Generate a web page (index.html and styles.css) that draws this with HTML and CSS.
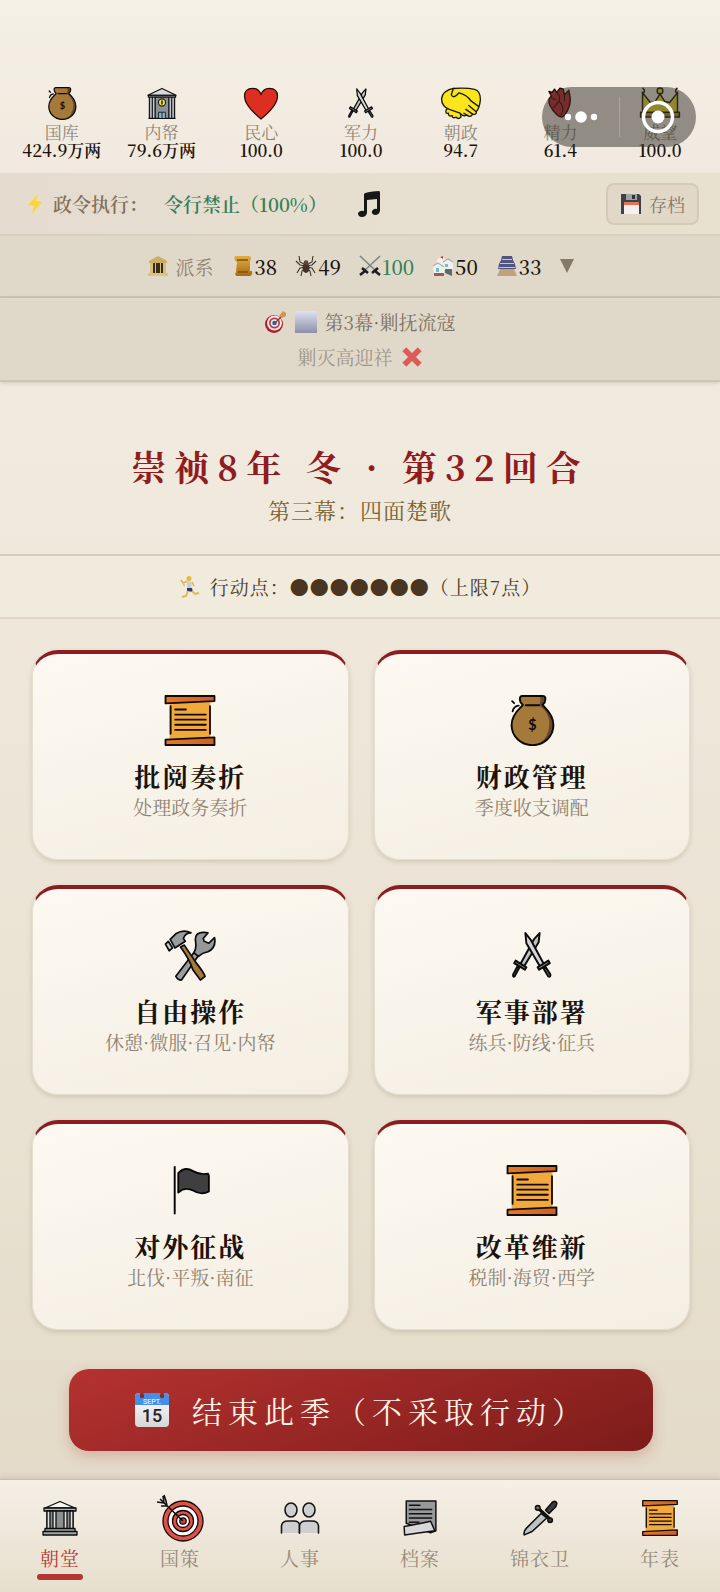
FILE: index.html
```html
<!DOCTYPE html>
<html lang="zh-CN">
<head>
<meta charset="utf-8">
<meta name="viewport" content="width=device-width, initial-scale=1">
<title>朝堂</title>
<link rel="stylesheet" href="styles.css">
</head>
<body>
<svg class="sprite" aria-hidden="true">
  <defs>
    <linearGradient id="gold" x1="0" y1="0" x2="0" y2="1"><stop offset="0" stop-color="#e0ae45"/><stop offset="1" stop-color="#a96a14"/></linearGradient>
    <linearGradient id="bolt-fill" x1="0" y1="0" x2="0" y2="1"><stop offset="0" stop-color="#ffd43c"/><stop offset="1" stop-color="#f8d63c"/></linearGradient>
    <linearGradient id="square-fill" x1="0" y1="0" x2="0" y2="1"><stop offset="0" stop-color="#dde2f0"/><stop offset="1" stop-color="#8d90a8"/></linearGradient>
    <linearGradient id="roll-fill"><stop offset="0" stop-color="#e27a2a"/><stop offset="1" stop-color="#cf5f22"/></linearGradient>
    <linearGradient id="page-fill" x1="0" y1="0" x2="0" y2="1"><stop offset="0" stop-color="#ffffff"/><stop offset="1" stop-color="#d6d6d6"/></linearGradient>

    <symbol id="scroll" viewBox="0 0 50 50">
      <path d="M5 7H45V43H5z" fill="#f1a93c"/>
      <g stroke="#120a04" stroke-width="1.8" stroke-linejoin="round" stroke-linecap="round">
        <path d="M1 1H49V6L1 8.2z" fill="url(#roll-fill)"/>
        <path d="M1 43.8L49 41.6V49H1z" fill="url(#roll-fill)"/>
        <path d="M6 11V38M44.6 11V38M10.5 14.2H21M10.5 19.2H40.5M10.5 24.2H40.5M10.5 29.2H40.5M10.5 34.2H40.5" fill="none"/>
      </g>
    </symbol>

    <symbol id="bag" viewBox="0 0 50 50">
      <path d="M16 9.5C12 6.500 12.500 1 15.500 1H35.500C39 1 39 6.500 35.500 9.500C36 12 46 17 46 29.500C46 41 36.500 49.200 25.500 49.200C14.500 49.200 5 41 5 29.500C5 17 15.500 12 16 9.500z" fill="#a57939"/>
      <path d="M33 2Q34 6 32 10Q43 18 42 30Q41 42 32 48Q46 42 46 29.500Q45 17 35.500 9.500Q39 5 35 1z" fill="#6a462f"/>
      <path d="M16 9.500C12 6.500 12.500 1 15.500 1H35.500C39 1 39 6.500 35.500 9.500C36 12 46 17 46 29.500C46 41 36.500 49.200 25.500 49.200C14.500 49.200 5 41 5 29.500C5 17 15.500 12 16 9.500zM19 10H32" fill="none" stroke="#0d0a06" stroke-width="1.9" stroke-linecap="round"/>
      <path d="M6 16Q7 11 12 10.500M7.500 8L5.500 6" fill="none" stroke="#0d0a06" stroke-width="1.8" stroke-linecap="round"/>
      <text x="25.500" y="34" text-anchor="middle" class="coin-sign">$</text>
    </symbol>

    <symbol id="bank" viewBox="0 0 32 34">
      <path d="M3 9H29V33H3z" fill="#8c9198"/>
      <path d="M4 10H8V33H4zM24 10H28V33H24z" fill="#c4c8cc"/>
      <path d="M1.500 8.500L16 1.500L30.500 8.500z" fill="#dadada" stroke="#111" stroke-width="1.200" stroke-linejoin="round"/>
      <path d="M2 8.500H30V10.500H2zM3 10.500V32M6 10.500V32M9 10.500V32M23 10.500V32M26 10.500V32M29 10.500V32M2 32.300H30" stroke="#111" fill="none" stroke-width="1.200"/>
      <circle cx="16" cy="16" r="3.700" fill="#eadc42" stroke="#222" stroke-width="1.200"/><path d="M16 14V18" stroke="#222" stroke-width="1.500"/>
      <path d="M12.500 32V26H19.500V32M16 26V32" fill="#8bb4c6" stroke="#17252c"/>
    </symbol>

    <symbol id="heart" viewBox="0 0 34 32">
      <path d="M17 31Q1 18 1 9Q1 1.300 9 1.300Q14.500 1.300 17 7Q19.500 1.300 25 1.300Q33 1.300 33 9Q33 18 17 31z" fill="#dc2f22" stroke="#2a0805" stroke-width="1.200"/>
    </symbol>

    <symbol id="swords" viewBox="0 0 50 50">
      <g stroke="#0c0c0c" stroke-width="1.900" stroke-linejoin="round" stroke-linecap="round">
        <path d="M32.500 3L31.500 12L17 36L13.500 33.500L27 9z" fill="#c3c3c3"/>
        <path d="M9 30L19.500 36.500L18 39L7.500 32.500zM12.500 37L8 45.500Q6 46.500 6.500 43.500L10.500 36z" fill="#666"/>
        <path d="M18.500 3L24 10L37 34L33 36L19.500 13z" fill="#d5d5d5"/>
        <path d="M41 30L30.500 36.500L32 39L42.500 32.500zM38.500 36.500L43 43.500Q43.500 46.500 41 45.500L36.500 38z" fill="#777"/>
      </g>
    </symbol>

    <symbol id="handshake" viewBox="0 0 42 34">
      <g fill="#fbe61d" stroke="#1d1a05" stroke-width="1.400" stroke-linejoin="round" stroke-linecap="round">
        <path d="M6 23Q4 28 8 27Q8 31 12 29.500Q12 33 16 31Q18 34 21 31L20 25L9 21z"/>
        <path d="M13 1.500Q27 .500 35 2.500Q41 4 41 13Q40 22 37 25Q37 29 33 28Q31 32 27 29Q23 31 20 27L9 23Q1 20 1 12Q2 4 13 1.500z"/>
        <path d="M13 1.500Q12 5 11 8Q13 12 17 8L19 6Q27 8 31 14L39 20M26 23L33 28M29 19L36 25M24 27L27 29" fill="none"/>
      </g>
    </symbol>

    <symbol id="organ" viewBox="0 0 24 30">
      <path d="M4 8L2 4L5 5L7 2L9 5L12 1L15 2L16 7L20 3L21 8Q23 16 16 26Q13 29 9 25Q1 17 2 11z" fill="#c22a30" stroke="#250808" stroke-width="1.300" stroke-linejoin="round"/>
      <path d="M9 5Q13 8 11 13L6 19M11 13Q17 17 13 26M4 10L9 12M16 7V13" fill="none" stroke="#300b0b" stroke-width="1"/>
    </symbol>

    <symbol id="crown" viewBox="0 0 42 34">
      <path d="M3 6L11 16L16 15L21 7L26 15L31 16L39 6V27H3z" fill="#f0e030" stroke="#222006" stroke-width="1.500"/>
      <path d="M1 26H41V31H1z" fill="#b8942a" stroke="#222006" stroke-width="1.500"/>
      <circle cx="21" cy="4" r="3" fill="#e8d832" stroke="#222006" stroke-width="1.400"/><path d="M3 1Q7 4 3 7M39 1Q35 4 39 7" stroke="#222006" stroke-width="1.600" fill="none"/>
    </symbol>

    <symbol id="tools" viewBox="0 0 54 54">
      <g stroke="#0d0d0d" stroke-width="1.800" stroke-linejoin="round" stroke-linecap="round">
        <path d="M12 49L31 24L36 27L18 53Q14 53 12 49z" fill="#9a9c9d"/>
        <path d="M42 2.500Q31 2 33 13Q34 20 31 24L36 28Q40 24 46 23Q55 19 53 8L47 14L42 12L41 9L46 3z" fill="#969899"/>
        <path d="M17 18L21 16L33 34Q41 44 43 49L38 53L30 42Q27 32 17 18z" fill="#a37a38"/>
        <path d="M6 10L12 4Q20 -1 28 3Q22 3 20 9L22 12L11 19z" fill="#999b9c"/>
        <path d="M1 15L4 12L8.500 19L5 22z" fill="#c7c8c8"/>
      </g>
    </symbol>

    <symbol id="flag" viewBox="0 0 50 50">
      <path d="M13.500 8Q20 1 28 6Q35 10 42.500 8.500Q43.500 9 43.500 11V26Q36 30 28 25Q20 21 13.500 27z" fill="#3f3f41" stroke="#050505" stroke-width="1.800" stroke-linejoin="round"/>
      <path d="M10 2V47.500" stroke="#050505" stroke-width="1.900" stroke-linecap="round"/>
    </symbol>

    <symbol id="temple" viewBox="0 0 36 36">
      <g stroke="#0d0d0d" stroke-width="1.300" stroke-linejoin="round">
        <path d="M3 8L18 1.500L33 8z" fill="#f6f6f4"/><path d="M2 8H34V11H2z" fill="#b3b4b4"/>
        <path d="M5 11H31V29H5z" fill="#8d8f91"/><path d="M5 11H8V29H5zM11 11H14V29H11zM22 11H25V29H22zM28 11H31V29H28z" fill="#dedfdf"/>
        <path d="M3 28.500H33V31.500H3zM1 31.500H35V35H1z" fill="#a5a6a6"/>
      </g>
    </symbol>

    <symbol id="target" viewBox="0 0 48 48">
      <g stroke="#160808" stroke-width="1.300"><circle cx="27" cy="27" r="20" fill="#dc5148"/><circle cx="27" cy="27" r="15" fill="#fff"/><circle cx="27" cy="27" r="10.500" fill="#dc5148"/><circle cx="27" cy="27" r="6.500" fill="#fff"/><circle cx="27" cy="27" r="3.200" fill="#dc3f39"/></g>
      <path d="M27 27L4 5M11 12L10 7M11 12L5 12M8 9L7 2M8 9L1 8M10 7L8 1" stroke="#111" stroke-width="1.600" fill="none"/>
    </symbol>

    <symbol id="people" viewBox="0 0 40 32">
      <g fill="#cfced1" stroke="#151515" stroke-width="1.600" stroke-linecap="round"><ellipse cx="11" cy="8" rx="6" ry="7"/><ellipse cx="29" cy="8" rx="6" ry="7"/><path d="M1.500 31V24Q2 19 8 19H14Q19 19 19.500 23V31"/><path d="M19.500 31V24Q20 19 26 19H32Q38 19 38.500 24V31"/></g>
    </symbol>

    <symbol id="papers" viewBox="0 0 32 34">
      <g stroke="#111" stroke-width="1.400" stroke-linejoin="round" stroke-linecap="round"><path d="M3 1H31V29L26 31L3 22z" fill="#96989a"/><path d="M6 5H16M6 9H27M6 13H27M6 17H27M6 21H15" fill="none"/><path d="M1 25Q13 23 26 20L30 29Q15 31 1.500 33z" fill="#d8d7db"/></g>
    </symbol>

    <symbol id="dagger" viewBox="0 0 32 32">
      <g stroke="#101010" stroke-width="1.400" stroke-linejoin="round"><path d="M21 9L27 2Q30 0 31 3L30 6L24 12z" fill="#3d3d3f"/><path d="M17 12L22 16L9 28L2 31Q1 28 4 25z" fill="#bfc2c3"/><path d="M14 7L26 18" stroke-width="3"/><circle cx="14" cy="7" r="2" fill="#777"/><circle cx="25" cy="18" r="2" fill="#444"/></g>
    </symbol>

    <symbol id="bolt" viewBox="0 0 20 22"><path d="M13 1L3 12L9 13L7 21L17 9L11 8z" fill="url(#bolt-fill)"/></symbol>
    <symbol id="note" viewBox="0 0 24 26"><path d="M7 3Q8 1 22 0Q23 0 23 2V20Q22 24 18 24Q14 23 15 20Q17 17 20 18V8L10 9V22Q9 26 5 26Q1 26 1 22Q3 19 7 20z" fill="#171717"/></symbol>
    <symbol id="disk" viewBox="0 0 22 22"><path d="M1 1H19L21 3V21H1z" fill="#3d4148"/><path d="M6 1H17V7H6z" fill="#9aa2aa"/><path d="M12 2H15V6H12z" fill="#30343a"/><path d="M4 9H19V21H4z" fill="#f3f0ef"/><path d="M4 9H19V12H4z" fill="#e37352"/></symbol>
    <symbol id="museum" viewBox="0 0 22 22"><path d="M2 6L11 1L20 6V8H2z" fill="#c9ae64"/><path d="M4 8H18V19H4z" fill="#3a2a1a"/><path d="M3 8H6V19H3zM8 8H9V19H8zM13 8H14V19H13zM16 8H19V19H16z" fill="#d6bf7a"/><path d="M1 18H21V21H1z" fill="#dcc478"/></symbol>
    <symbol id="parchment" viewBox="0 0 20 22"><path d="M2 1H17Q19 3 17 6V16H19Q20 20 17 21H4Q1 20 3 17L4 7Q0 5 2 1z" fill="url(#gold)"/><path d="M4 5H15M5 17H15" stroke="#8a4d0c" stroke-width="1.300"/></symbol>
    <symbol id="spider" viewBox="0 0 20 22"><g fill="none" stroke="#3e322c" stroke-width="1.100"><path d="M10 10L4 7L3 1M10 10L16 7L17 1M10 11L4 10L0 6M10 11L16 10L20 6M10 12L4 13L1 18M10 12L16 13L19 18M10 13L6 16L5 21M10 13L14 16L15 21"/></g><ellipse cx="10" cy="13" rx="3.500" ry="5" fill="#443226"/><circle cx="10" cy="7.500" r="2.300" fill="#5b463a"/></symbol>
    <symbol id="blades" viewBox="0 0 22 22"><path d="M1 1L17 16M21 1L5 16" stroke="#7c858b" stroke-width="1.600"/><path d="M3 13L9 18M1 20L6 16M19 13L13 18M21 20L16 16" stroke="#1d1d20" stroke-width="2.600"/></symbol>
    <symbol id="houses" viewBox="0 0 22 22"><path d="M1 11L6 8L12 12V21H2zM5 5L9 1L14 5V10H5zM11 7L16 4L21 7V15H11z" fill="#edf1ef"/><path d="M1 11L6 8L12 12M11 7L16 4L21 7" stroke="#b9aaa4" stroke-width="1.200" fill="none"/><path d="M8 2L11 1L11 4z" fill="#b5403a"/><path d="M4 13H7V17H4zM13 9H16V12H13z" fill="#6cc3c4"/><path d="M2 18H12V21H2z" fill="#9a5a4c"/><path d="M13 14H20V21L13 18z" fill="#65676e"/></symbol>
    <symbol id="castle" viewBox="0 0 20 22"><path d="M3 14H17L20 21H0z" fill="#bda27b"/><path d="M5 1H15L16 5L18 9L19 14H1L2 9L4 5z" fill="#50547f"/><path d="M5 4.500H15M3 8.500H17M2 12.500H18" stroke="#c7c5cc" stroke-width="1.200"/></symbol>
    <symbol id="dart" viewBox="0 0 22 22"><circle cx="9" cy="13" r="9" fill="#a91e2c"/><circle cx="9.500" cy="12" r="7.500" fill="#f0e7e6"/><circle cx="9.500" cy="12" r="5.500" fill="#c73543"/><circle cx="9.500" cy="12" r="3.800" fill="#e9edf2"/><circle cx="9.500" cy="12" r="2.300" fill="#2a6a9a"/><path d="M10 12L19 3" stroke="#6a4538" stroke-width="1.200"/><path d="M14 5L18 0L21 2L21 5L17 7z" fill="#d59052"/></symbol>
    <symbol id="cross" viewBox="0 0 20 20"><path d="M3 3L17 17M17 3L3 17" stroke="#dc5c5a" stroke-width="5"/></symbol>
    <symbol id="runner" viewBox="0 0 20 22"><path d="M8 5L3 7L1 4M3 9L5 9M12 6L14 10" stroke="#dcb453" stroke-width="1.600" fill="none"/><circle cx="9" cy="2.500" r="2.500" fill="#e9ba37"/><path d="M7 5L12 6L11 13H7z" fill="#c4cedb"/><path d="M7 12H12L13 16L7 15z" fill="#35395c"/><path d="M12 15L15 18L19 17M8 15L6 20L2 21" stroke="#dcb95c" stroke-width="2" fill="none"/></symbol>
    <symbol id="calendar" viewBox="0 0 36 36">
      <rect x="1" y="1" width="34" height="34" rx="4" fill="url(#page-fill)"/><path d="M1 13V5Q1 1 5 1H31Q35 1 35 5V13z" fill="#4590e6"/><path d="M8 0V4M28 0V4" stroke="#a52c28" stroke-width="3" stroke-linecap="round"/><circle cx="8" cy="4" r="2.200" fill="#8e2926"/><circle cx="28" cy="4" r="2.200" fill="#8e2926"/>
      <text x="18" y="12" text-anchor="middle" class="cal-month">SEPT.</text><text x="18" y="30" text-anchor="middle" class="cal-day">15</text>
    </symbol>
  </defs>
</svg>

<div class="app">
  <header class="stats">
    <div class="stat"><svg class="stat-icon"><use href="#bag"/></svg><span class="stat-label">国库</span><b>424.9万两</b></div>
    <div class="stat"><svg class="stat-icon"><use href="#bank"/></svg><span class="stat-label">内帑</span><b>79.6万两</b></div>
    <div class="stat"><svg class="stat-icon"><use href="#heart"/></svg><span class="stat-label">民心</span><b>100.0</b></div>
    <div class="stat"><svg class="stat-icon"><use href="#swords"/></svg><span class="stat-label">军力</span><b>100.0</b></div>
    <div class="stat"><svg class="stat-icon"><use href="#handshake"/></svg><span class="stat-label">朝政</span><b>94.7</b></div>
    <div class="stat"><svg class="stat-icon"><use href="#organ"/></svg><span class="stat-label">精力</span><b>61.4</b></div>
    <div class="stat"><svg class="stat-icon"><use href="#crown"/></svg><span class="stat-label">威望</span><b>100.0</b></div>
    <div class="capsule">
      <button class="capsule-btn" aria-label="更多"><svg width="34" height="34" viewBox="0 0 34 34" fill="#fff"><circle cx="4" cy="17" r="3.200"/><circle cx="17" cy="17" r="5.800"/><circle cx="30" cy="17" r="3.200"/></svg></button>
      <button class="capsule-btn" aria-label="关闭"><svg width="34" height="34" viewBox="0 0 34 34"><circle cx="17" cy="17" r="14.500" fill="none" stroke="#fff" stroke-width="3.500"/><circle cx="17" cy="17" r="6.500" fill="#fff"/></svg></button>
    </div>
  </header>

  <section class="policy">
    <svg class="mini"><use href="#bolt"/></svg>
    <span class="policy-name">政令执行：</span>
    <span class="policy-value">令行禁止（100%）</span>
    <button class="music" aria-label="音乐"><svg class="music-icon"><use href="#note"/></svg></button>
    <button class="save"><svg class="mini"><use href="#disk"/></svg>存档</button>
  </section>

  <section class="factions">
    <span class="faction-title"><svg class="mini"><use href="#museum"/></svg>派系</span>
    <span class="faction"><svg class="mini"><use href="#parchment"/></svg>38</span>
    <span class="faction"><svg class="mini"><use href="#spider"/></svg>49</span>
    <span class="faction good"><svg class="mini"><use href="#blades"/></svg>100</span>
    <span class="faction"><svg class="mini"><use href="#houses"/></svg>50</span>
    <span class="faction"><svg class="mini"><use href="#castle"/></svg>33</span>
    <button class="expand" aria-label="展开派系"><svg width="14" height="14" viewBox="0 0 14 14"><path d="M0 0H14L7 14z" fill="#85796a"/></svg></button>
  </section>

  <section class="goal">
    <div class="goal-row"><svg class="mini"><use href="#dart"/></svg><svg class="mini"><rect width="22" height="22" fill="url(#square-fill)"/></svg>第3幕·剿抚流寇</div>
    <div class="goal-row dim">剿灭高迎祥<svg class="mini"><use href="#cross"/></svg></div>
  </section>

  <main class="court">
    <div class="turn">
      <h1>崇祯8年 冬 · 第32回合</h1>
      <p>第三幕：四面楚歌</p>
    </div>
    <div class="points"><svg class="mini"><use href="#runner"/></svg><span>行动点：<span class="dots">●●●●●●●</span>（上限7点）</span></div>

    <div class="cards">
      <button class="card"><svg class="card-icon"><use href="#scroll"/></svg><strong>批阅奏折</strong><span>处理政务奏折</span></button>
      <button class="card"><svg class="card-icon"><use href="#bag"/></svg><strong>财政管理</strong><span>季度收支调配</span></button>
      <button class="card"><svg class="card-icon"><use href="#tools"/></svg><strong>自由操作</strong><span>休憩·微服·召见·内帑</span></button>
      <button class="card"><svg class="card-icon"><use href="#swords"/></svg><strong>军事部署</strong><span>练兵·防线·征兵</span></button>
      <button class="card"><svg class="card-icon"><use href="#flag"/></svg><strong>对外征战</strong><span>北伐·平叛·南征</span></button>
      <button class="card"><svg class="card-icon"><use href="#scroll"/></svg><strong>改革维新</strong><span>税制·海贸·西学</span></button>
    </div>

    <button class="end-turn"><svg class="cal"><use href="#calendar"/></svg>结束此季（不采取行动）</button>
  </main>

  <nav class="tabs">
    <a class="tab active" href="#"><svg class="tab-icon"><use href="#temple"/></svg>朝堂</a>
    <a class="tab" href="#"><svg class="tab-icon large"><use href="#target"/></svg>国策</a>
    <a class="tab" href="#"><svg class="tab-icon wide"><use href="#people"/></svg>人事</a>
    <a class="tab" href="#"><svg class="tab-icon"><use href="#papers"/></svg>档案</a>
    <a class="tab" href="#"><svg class="tab-icon"><use href="#dagger"/></svg>锦衣卫</a>
    <a class="tab" href="#"><svg class="tab-icon"><use href="#scroll"/></svg>年表</a>
  </nav>
</div>
</body>
</html>
```
FILE: styles.css
```css
* { box-sizing: border-box; }
html { height: 100%; }
body {
  margin: 0;
  height: 100%;
  color: #1c140c;
  font-family: "Noto Serif CJK TC", "Noto Serif CJK SC", "Noto Serif SC", "Noto Sans CJK SC", serif;
  font-weight: 400;
}
button { margin: 0; padding: 0; border: 0; background: none; color: inherit; font: inherit; cursor: pointer; }
a { color: inherit; text-decoration: none; }
svg { display: block; flex: none; }
.sprite { position: absolute; width: 0; height: 0; }
.coin-sign, .cal-month, .cal-day { letter-spacing: 0; }
.coin-sign { font: bold 14px Lato, sans-serif; fill: #0d0a06; }
.cal-month { font: 7px Roboto, sans-serif; fill: #fff; }
.cal-day { font: 500 18px Roboto, sans-serif; fill: #222; }

.app {
  display: flex;
  flex-direction: column;
  min-height: 100%;
  background: linear-gradient(#f3efe4, #f0e9dd 30%, #e9e2d2 70%, #e2d8c6);
}
.mini { width: 22px; height: 22px; }

.stats {
  position: relative;
  display: grid;
  grid-template-columns: repeat(7, 1fr);
  padding: 87px 10px 14px 12px;
  background: linear-gradient(#f4f0e5, #f1e9df);
}
.stat {
  display: flex;
  flex-direction: column;
  align-items: center;
  font-size: 17px;
  line-height: 18px;
  white-space: nowrap;
}
.stat-icon { width: 42px; height: 33px; margin-bottom: 3px; }
.stat-label { color: #8f8576; }
.stat b { font-weight: 600; }
.capsule {
  position: absolute;
  top: 87px;
  right: 24px;
  display: flex;
  width: 154px;
  height: 60px;
  border-radius: 30px;
  background: rgba(50, 45, 40, 0.5);
}
.capsule-btn { display: flex; flex: 1; align-items: center; justify-content: center; position: relative; }
.capsule-btn + .capsule-btn::before {
  content: "";
  position: absolute;
  left: 0;
  top: 10px;
  bottom: 10px;
  width: 1px;
  background: #aaa49c;
}

.policy {
  display: flex;
  align-items: center;
  height: 63px;
  padding: 0 21px 0 24px;
  border-bottom: 2px solid #d8d0bf;
  background: linear-gradient(90deg, #e5dccf, #e8e1cf);
  font-size: 19px;
  font-weight: 600;
}
.policy-name { margin-left: 7px; color: #82705c; }
.policy-value { margin-left: 16px; color: #358058; }
.music { margin-left: 30px; }
.music-icon { width: 24px; height: 26px; }
.save {
  display: flex;
  align-items: center;
  gap: 7px;
  height: 42px;
  margin-left: auto;
  padding: 0 12px;
  border: 2px solid #d3c9b7;
  border-radius: 8px;
  background: #e2d8c7;
  color: #85796a;
  font-size: 18px;
  font-weight: 400;
}

.factions {
  display: flex;
  align-items: center;
  justify-content: center;
  gap: 18px;
  height: 62px;
  border-bottom: 2px solid #cfc6b5;
  background: #e0d9c9;
  font-size: 20px;
}
.faction-title { display: flex; align-items: center; gap: 7px; color: #8f8474; font-size: 19px; }
.faction { display: flex; align-items: center; gap: 1px; font-weight: 500; }
.good { color: #358058; }

.goal {
  display: flex;
  flex-direction: column;
  align-items: center;
  gap: 7px;
  height: 84px;
  padding-top: 10px;
  border-bottom: 2px solid #cdc5b4;
  background: #e0d9c9;
  box-shadow: 0 1px 4px rgba(80, 60, 30, 0.2);
}
.goal-row { display: flex; align-items: center; gap: 8px; color: #7d7263; font-size: 19px; line-height: 28px; }
.dim { color: #a0978a; }

.court { display: flex; flex: 1; flex-direction: column; }
.turn { padding: 59px 0 25px; border-bottom: 2px solid #d5cdbd; text-align: center; }
.turn h1 {
  margin: 0;
  color: #8f1c1e;
  font-size: 35px;
  font-weight: 700;
  letter-spacing: 8px;
  line-height: 50px;
}
.turn p { margin: 0; color: #7b6233; font-size: 22px; letter-spacing: 1px; line-height: 38px; }
.points {
  display: flex;
  align-items: center;
  justify-content: center;
  gap: 9px;
  height: 63px;
  border-bottom: 2px solid #e0d7c7;
  background: #f0ebdc;
  color: #4a3b28;
  font-size: 19px;
  letter-spacing: 1px;
}
.dots { color: #4a3522; font-family: "Noto Sans CJK SC", sans-serif; }

.cards { display: grid; grid-template-columns: 1fr 1fr; gap: 25px; padding: 31px 30px 39px 32px; }
.card {
  display: flex;
  flex-direction: column;
  align-items: center;
  height: 210px;
  padding-top: 41px;
  border: 1px solid #e6dfd1;
  border-top: 4px solid #8b1c20;
  border-radius: 26px;
  background: linear-gradient(165deg, #fdf9f2, #f4eee2);
  box-shadow: 0 2px 5px rgba(100, 80, 50, 0.2);
}
.card-icon { width: 54px; height: 51px; }
.card strong { margin-top: 11px; font-size: 26px; font-weight: 700; letter-spacing: 2px; line-height: 38px; }
.card span { color: #8f8373; font-size: 19px; line-height: 23px; }

.end-turn {
  display: flex;
  align-items: center;
  justify-content: center;
  gap: 22px;
  height: 82px;
  margin: 0 67px 28px 69px;
  border-radius: 20px;
  background: linear-gradient(160deg, #b53230, #7c1c1a);
  box-shadow: 0 5px 14px rgba(160, 50, 40, 0.25);
  color: #fdf1e8;
  font-size: 30px;
  letter-spacing: 6px;
}
.cal { width: 36px; height: 36px; }

.tabs {
  display: grid;
  grid-template-columns: repeat(6, 1fr);
  height: 113px;
  border-top: 1px solid #c9c0b2;
  background: linear-gradient(#f5efe6, #e7dfcd);
  box-shadow: 0 -2px 5px rgba(80, 60, 30, 0.12);
}
.tab {
  position: relative;
  display: grid;
  grid-template-rows: 56px 24px;
  justify-items: center;
  align-items: center;
  align-content: start;
  padding-top: 10px;
  color: #94897a;
  font-size: 19px;
  letter-spacing: 1px;
  line-height: 24px;
}
.tab-icon { width: 36px; height: 36px; }
.tab-icon.large { width: 48px; height: 48px; }
.tab-icon.wide { width: 40px; height: 32px; }
.active { color: #b53a36; }
.active::after {
  content: "";
  position: absolute;
  bottom: 12px;
  width: 46px;
  height: 6px;
  border-radius: 3px;
  background: #b23632;
}
```
